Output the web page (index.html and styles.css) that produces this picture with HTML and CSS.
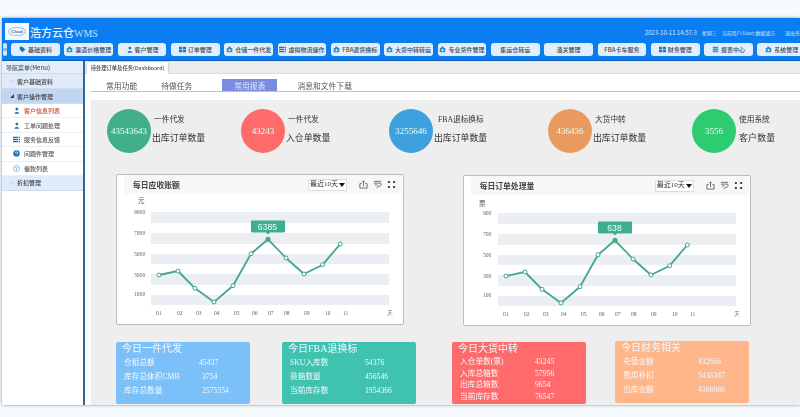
FILE: index.html
```html
<!DOCTYPE html>
<html lang="zh">
<head>
<meta charset="utf-8">
<title>浩方云仓WMS</title>
<link rel="stylesheet" href="styles.css">
</head>
<body>
<svg class="defs" width="0" height="0" aria-hidden="true">
  <symbol id="i-tag" viewBox="0 0 10 10"><path d="M1 1h4l4 4-4 4-4-4z" fill="#1f6fb8"/></symbol>
  <symbol id="i-box" viewBox="0 0 10 10"><path d="M1 3h8v6H1zM3 3V1h4v2" fill="#2f8fd0"/><circle cx="5" cy="6" r="1.4" fill="#fff"/></symbol>
  <symbol id="i-user" viewBox="0 0 10 10"><circle cx="5.5" cy="3" r="2" fill="#1f6fb8"/><path d="M2 9.500c.5-3 6-3 7 0z" fill="#1f6fb8"/></symbol>
  <symbol id="i-grid" viewBox="0 0 10 10"><path d="M0 1h4.500v3.500H0zM5.500 1H10v3.500H5.500zM0 5.500h4.500V9H0zM5.500 5.500H10V9H5.500z" fill="#1f78c8"/></symbol>
  <symbol id="i-list" viewBox="0 0 10 10"><path d="M0 1h7v2H0zM8 1h2v2H8zM0 4h7v2H0zM8 4h2v2H8zM0 7h7v2H0zM8 7h2v2H8z" fill="#2a6ea8"/></symbol>
  <symbol id="i-db" viewBox="0 0 10 10"><path d="M1 1h8v2.300H1zM1 3.900h8v2.300H1zM1 6.800h8v2.300H1z" fill="#3a8fd0"/></symbol>
  <symbol id="i-q" viewBox="0 0 10 10"><circle cx="5" cy="5" r="4.600" fill="#1f78c8"/><path d="M3.500 4c0-2 3-2 3 0 0 1-1.500 1-1.500 2" stroke="#fff" fill="none"/></symbol>
  <symbol id="i-coin" viewBox="0 0 10 10"><circle cx="5" cy="5" r="4.200" fill="none" stroke="#5aa6de"/><path d="M3.500 3 5 5l1.500-2M5 5v3" stroke="#5aa6de" fill="none"/></symbol>
  <symbol id="i-share" viewBox="0 0 10 10"><path d="M3 4H1v5h8V4H7M5 7V1M3.500 2.500 5 1l1.500 1.500" fill="none" stroke="#444" stroke-width=".8"/></symbol>
  <symbol id="i-view" viewBox="0 0 10 10"><path d="M1 1.500h8M1 3.500h7.500c1.500 2-.5 4-2.500 3.500M2 5.500h3M4 8.500c1.500 0 2-1 2-2" fill="none" stroke="#444" stroke-width=".8"/></symbol>
  <symbol id="i-full" viewBox="0 0 10 10"><path d="M1 1h2.200v2.200H1zM6.800 1H9v2.200H6.800zM1 6.800h2.200V9H1zM6.800 6.800H9V9H6.800z" fill="#444"/></symbol>
</svg>

<div class="app">
  <header class="topbar">
    <div class="brand-row">
      <div class="logo"><span class="logo-oval">Cloud</span></div>
      <div class="brand"><span class="brand-cn">浩方云仓</span>WMS</div>
      <div class="status">
        <span>2023-10-11 14:57:3</span>
        <span class="status-day">星期三</span>
        <span class="status-user">当前用户(User):数据填方</span>
        <span class="status-exit">退出系</span>
      </div>
    </div>
    <nav class="nav">
      <button class="collapse">«</button>
      <a class="nav-btn"><svg class="ico"><use href="#i-tag"/></svg>基础资料</a>
      <a class="nav-btn"><svg class="ico"><use href="#i-box"/></svg>渠道价格管理</a>
      <a class="nav-btn"><svg class="ico"><use href="#i-user"/></svg>客户管理</a>
      <a class="nav-btn"><svg class="ico"><use href="#i-grid"/></svg>订单管理</a>
      <a class="nav-btn"><svg class="ico"><use href="#i-box"/></svg>仓储一件代发</a>
      <a class="nav-btn"><svg class="ico"><use href="#i-list"/></svg>虚拟物流操作</a>
      <a class="nav-btn"><svg class="ico"><use href="#i-box"/></svg>FBA退货换标</a>
      <a class="nav-btn"><svg class="ico"><use href="#i-box"/></svg>大货中转转运</a>
      <a class="nav-btn"><svg class="ico"><use href="#i-box"/></svg>专业货件管理</a>
      <a class="nav-btn">集运仓转运</a>
      <a class="nav-btn">清关管理</a>
      <a class="nav-btn">FBA卡车服务</a>
      <a class="nav-btn"><svg class="ico"><use href="#i-grid"/></svg>财务管理</a>
      <a class="nav-btn"><svg class="ico"><use href="#i-db"/></svg>报表中心</a>
      <a class="nav-btn"><svg class="ico"><use href="#i-box"/></svg>系统管理</a>
    </nav>
  </header>

  <div class="body">
    <aside class="side">
      <div class="side-title">导航菜单(Menu)</div>
      <div class="side-group"><span class="caret">▷</span>客户基础资料</div>
      <div class="side-group side-group-open"><span class="caret">◢</span>客户操作管理</div>
      <div class="side-item side-item-on"><svg class="ico"><use href="#i-user"/></svg>客户信息列表</div>
      <div class="side-item"><svg class="ico"><use href="#i-user"/></svg>工单问题处理</div>
      <div class="side-item"><svg class="ico"><use href="#i-list"/></svg>服务信息反馈</div>
      <div class="side-item"><svg class="ico"><use href="#i-q"/></svg>问题件管理</div>
      <div class="side-item"><svg class="ico"><use href="#i-coin"/></svg>催款列表</div>
      <div class="side-group"><span class="caret">▷</span>折扣管理</div>
    </aside>

    <main class="main">
      <div class="tabbar"><div class="tab">待处理订单及任务(Dashboard)</div></div>
      <div class="content">
        <div class="subtabs">
          <span class="subtab subtab-a">常用功能</span>
          <span class="subtab subtab-b">待做任务</span>
          <span class="subtab subtab-on">常用报表</span>
          <span class="subtab subtab-d">消息和文件下载</span>
        </div>
        <section class="panel">
          <div class="stats">
            <div class="stat">
              <div class="circle c-green">43543643</div>
              <div class="stat-text"><div class="stat-top">一件代发</div><div class="stat-main">出库订单数量</div></div>
            </div>
            <div class="stat">
              <div class="circle c-red">43243</div>
              <div class="stat-text"><div class="stat-top">一件代发</div><div class="stat-main">入仓单数量</div></div>
            </div>
            <div class="stat">
              <div class="circle c-blue">3255646</div>
              <div class="stat-text"><div class="stat-top stat-top-in">FBA退标换标</div><div class="stat-main">出库订单数量</div></div>
            </div>
            <div class="stat">
              <div class="circle c-orange">436436</div>
              <div class="stat-text"><div class="stat-top">大货中转</div><div class="stat-main">出库订单数量</div></div>
            </div>
            <div class="stat">
              <div class="circle c-lime">3556</div>
              <div class="stat-text"><div class="stat-top">使用系统</div><div class="stat-main stat-wide">客户数量</div></div>
            </div>
          </div>

          <div class="charts">
            <article class="chart">
              <div class="chart-head">
                <span class="chart-title">每日应收账额</span>
                <span class="picker">最近10天<i class="tri"></i></span>
                <svg class="tool"><use href="#i-share"/></svg>
                <svg class="tool"><use href="#i-view"/></svg>
                <svg class="tool"><use href="#i-full"/></svg>
              </div>
              <svg class="plot" viewBox="117 193 286 130">
                <g class="bands"><rect x="151" y="211" width="238" height="11"/><rect x="151" y="232" width="238" height="11"/><rect x="151" y="253" width="238" height="10"/><rect x="151" y="273" width="238" height="11"/><rect x="151" y="294" width="238" height="10"/></g>
                <g class="axis"><text x="134" y="213">9000</text><text x="134" y="234">7000</text><text x="134" y="255">5000</text><text x="134" y="276">3000</text><text x="134" y="295">1000</text></g>
                <text class="unit" x="138" y="202">元</text>
                <g class="axis axis-x"><text x="156" y="314">01</text><text x="177" y="314">02</text><text x="196" y="314">03</text><text x="214" y="314">04</text><text x="234" y="314">05</text><text x="252" y="314">06</text><text x="268" y="314">07</text><text x="284" y="314">08</text><text x="304" y="314">09</text><text x="325" y="314">10</text><text x="343" y="314">11</text><text x="387" y="314">天</text></g>
                <polyline class="line" points="159,274 178,270 195,287.300 214,301 233,284.700 251,252.700 268,238.300 286,257 304,273 322.700,263.700 340.300,243"/>
                <g class="dots"><circle cx="159" cy="274" r="2"/><circle cx="178" cy="270" r="2"/><circle cx="195" cy="287.300" r="2"/><circle cx="214" cy="301" r="2"/><circle cx="233" cy="284.700" r="2"/><circle cx="251" cy="252.700" r="2"/><circle cx="286" cy="257" r="2"/><circle cx="304" cy="273" r="2"/><circle cx="322.700" cy="263.700" r="2"/><circle cx="340.300" cy="243" r="2"/></g>
                <circle class="dot-on" cx="268" cy="238.300" r="2.500"/>
                <path class="tip" d="M252 219.500h32a1 1 0 0 1 1 1v10a1 1 0 0 1-1 1h-14l-2 2-2-2h-14a1 1 0 0 1-1-1v-10a1 1 0 0 1 1-1z"/>
                <text class="tip-text" x="267.500" y="228.500">6385</text>
              </svg>
            </article>

            <article class="chart chart-low">
              <div class="chart-head">
                <span class="chart-title chart-title-b">每日订单处理量</span>
                <span class="picker">最近10天<i class="tri"></i></span>
                <svg class="tool"><use href="#i-share"/></svg>
                <svg class="tool"><use href="#i-view"/></svg>
                <svg class="tool"><use href="#i-full"/></svg>
              </div>
              <svg class="plot" viewBox="117 193 286 130">
                <g class="bands"><rect x="151" y="211" width="238" height="11"/><rect x="151" y="232" width="238" height="11"/><rect x="151" y="253" width="238" height="10"/><rect x="151" y="273" width="238" height="11"/><rect x="151" y="294" width="238" height="10"/></g>
                <g class="axis"><text x="136" y="213">900</text><text x="136" y="234">700</text><text x="136" y="255">500</text><text x="136" y="276">300</text><text x="136" y="295">100</text></g>
                <text class="unit" x="132" y="204">票</text>
                <g class="axis axis-x"><text x="156" y="314">01</text><text x="177" y="314">02</text><text x="196" y="314">03</text><text x="214" y="314">04</text><text x="234" y="314">05</text><text x="252" y="314">06</text><text x="268" y="314">07</text><text x="284" y="314">08</text><text x="304" y="314">09</text><text x="325" y="314">10</text><text x="343" y="314">11</text><text x="387" y="314">天</text></g>
                <polyline class="line" points="159,274 178,270 195,287.300 214,301 233,284.700 251,252.700 268,238.300 286,257 304,273 322.700,263.700 340.300,243"/>
                <g class="dots"><circle cx="159" cy="274" r="2"/><circle cx="178" cy="270" r="2"/><circle cx="195" cy="287.300" r="2"/><circle cx="214" cy="301" r="2"/><circle cx="233" cy="284.700" r="2"/><circle cx="251" cy="252.700" r="2"/><circle cx="286" cy="257" r="2"/><circle cx="304" cy="273" r="2"/><circle cx="322.700" cy="263.700" r="2"/><circle cx="340.300" cy="243" r="2"/></g>
                <circle class="dot-on" cx="268" cy="238.300" r="2.500"/>
                <path class="tip" d="M252 219.500h32a1 1 0 0 1 1 1v10a1 1 0 0 1-1 1h-14l-2 2-2-2h-14a1 1 0 0 1-1-1v-10a1 1 0 0 1 1-1z"/>
                <text class="tip-text" x="267.500" y="228.500">638</text>
              </svg>
            </article>
          </div>

          <div class="summaries">
            <article class="sum s-blue">
              <h3 class="sum-title">今日一件代发</h3>
              <dl class="sum-rows">
                <div class="sum-row"><dt>仓租总额</dt><dd>45437</dd></div>
                <div class="sum-row"><dt>库存总体积CMB</dt><dd class="nudge">3754</dd></div>
                <div class="sum-row"><dt>库存总数量</dt><dd class="nudge">2575554</dd></div>
              </dl>
            </article>
            <article class="sum s-teal">
              <h3 class="sum-title">今日FBA退换标</h3>
              <dl class="sum-rows">
                <div class="sum-row"><dt>SKU入库数</dt><dd>54376</dd></div>
                <div class="sum-row"><dt>装箱数量</dt><dd>456546</dd></div>
                <div class="sum-row"><dt>当前库存数</dt><dd>1954366</dd></div>
              </dl>
            </article>
            <article class="sum s-red">
              <h3 class="sum-title">今日大货中转</h3>
              <dl class="sum-rows sum-rows-tight">
                <div class="sum-row"><dt>入仓单数(票)</dt><dd>43245</dd></div>
                <div class="sum-row"><dt>入库总箱数</dt><dd>57956</dd></div>
                <div class="sum-row"><dt>出库总箱数</dt><dd>9654</dd></div>
                <div class="sum-row"><dt>当前库存数</dt><dd>76547</dd></div>
              </dl>
            </article>
            <article class="sum s-peach">
              <h3 class="sum-title">今日财务相关</h3>
              <dl class="sum-rows">
                <div class="sum-row"><dt>充值金额</dt><dd>432666</dd></div>
                <div class="sum-row"><dt>费用补扣</dt><dd>5436347</dd></div>
                <div class="sum-row"><dt>出库金额</dt><dd>4366666</dd></div>
              </dl>
            </article>
          </div>
        </section>
      </div>
    </main>
  </div>
</div>
</body>
</html>
```

FILE: styles.css
```css
* { box-sizing: border-box; }
html, body { margin: 0; height: 100%; }
body {
  background: #f6fbff;
  overflow: hidden;
  font-family: "Liberation Serif", "Noto Sans CJK SC", serif;
  color: #333;
  padding: 18px 0 0 2px;
}
.defs { position: absolute; }
.app {
  height: 387px;
  display: flex;
  flex-direction: column;
  box-shadow: 0 0 3px rgba(0,0,0,.45);
  background: #fff;
  filter: blur(.35px);
  overflow: hidden;
}
.ico { width: 7px; height: 7px; flex: none; }

/* header */
.topbar { height: 43px; background: #0a7df2; border-bottom: 1px solid #0a5fb4; flex: none; }
.brand-row { height: 25px; display: flex; align-items: center; padding-left: 3px; color: #fff; }
.logo { width: 24px; height: 17px; background: #f4f8fd; display: flex; align-items: center; justify-content: center; margin-top: 2px; }
.logo-oval { font: bold 4px "Liberation Sans", sans-serif; color: #2a6ab0; border: 1px solid #9cc; border-radius: 50%; padding: 1px 2px; }
.brand { margin-left: 1px; font-size: 10px; color: #bfe0ff; margin-top: 2px; }
.brand-cn { font: 500 11px "Noto Sans CJK SC", sans-serif; color: #e6f3ff; }
.status { margin-left: auto; display: flex; align-items: center; font: 6px "Noto Sans CJK SC", sans-serif; color: #d5e9ff; white-space: nowrap; margin-top: 4px; }
.status-day { margin-left: 5px; font-size: 5px; }
.status-user { margin-left: 5px; font-size: 4.800px; }
.status-exit { margin-left: 10px; font-size: 5px; }
.nav { display: flex; gap: 4.670px; padding-left: 1px; height: 13px; align-items: stretch; white-space: nowrap; }
.collapse { width: 8px; margin-right: -1px; border: 0; padding: 0; background: #d8e7fa; color: #3a78b8; font-size: 8px; border-radius: 2px; line-height: 10px; }
.nav-btn {
  flex: 0 0 48.670px;
  display: flex; align-items: center; justify-content: center; gap: 2px;
  background: #e3eefc; border-radius: 3px;
  font: 500 6px "Noto Sans CJK SC", sans-serif; color: #3a4a5a;
}

/* body */
.body { flex: 1; display: flex; min-height: 0; }
.side { width: 83px; flex: none; border-right: 2px solid #2f6796; background: #fff; font: 500 6px "Noto Sans CJK SC", sans-serif; color: #444; }
.side-title { height: 13px; line-height: 13px; padding-left: 4px; background: #e6eff9; color: #4a5a6a; border-bottom: 1px solid #cfdcec; }
.side-group { height: 15px; display: flex; align-items: center; padding-left: 8px; gap: 3px; background: #dfebfb; border-bottom: 1px solid #cfdcec; }
.side-group-open { background: #c0d6f3; }
.caret { font-size: 4px; color: #888; }
.side-group-open .caret { color: #345; }
.side-item { height: 14.400px; display: flex; align-items: center; gap: 4px; padding-left: 11px; border-bottom: 1px solid #eee; color: #555; }
.side-item-on { color: #c4502f; }

.main { flex: 1; min-width: 0; display: flex; flex-direction: column; }
.tabbar { height: 13px; background: #ececec; padding-left: 1px; border-bottom: 1px solid #ddd; flex: none; }
.tab { width: 83px; height: 13px; background: #fff; border: 1px solid #cdd6e0; border-bottom: 0; border-radius: 2px 2px 0 0; font: 500 5.300px/12px "Noto Sans CJK SC", sans-serif; text-align: center; color: #445; white-space: nowrap; }
.content { flex: 1; padding-left: 6px; display: flex; flex-direction: column; min-height: 0; }
.subtabs { height: 18px; flex: none; display: flex; align-items: flex-end; border-bottom: 1px solid #b7c2e2; font-size: 7.800px; color: #555; }
.subtab { height: 12px; line-height: 11px; padding-top: 2px; white-space: nowrap; }
.subtab-a { margin-left: 15px; }
.subtab-b { margin-left: 24px; }
.subtab-on { margin-left: 30px; width: 55px; background: #7b8be0; color: #dfe4fa; text-align: center; }
.subtab-d { margin-left: 20px; }

.panel { margin-top: 8px; flex: 1; background: #eee; padding: 9px 0 0 16px; min-height: 0; }
.stats { display: grid; grid-template-columns: 134px 148px 159px 144px auto; height: 44px; }
.stat { display: flex; }
.circle { width: 44px; height: 44px; border-radius: 50%; flex: none; display: flex; align-items: center; justify-content: center; color: #e8fff7; font-size: 9px; }
.c-green { background: #41ae8c; }
.c-red { background: #ff6b6b; }
.c-blue { background: #3ea0dc; }
.c-orange { background: #e99b5f; }
.c-lime { background: #2ecc71; }
.stat-text { padding: 6px 0 0 1px; white-space: nowrap; color: #333; }
.stat-top { font-size: 7.700px; line-height: 10px; padding-left: 2px; }
.stat-top-in { padding-left: 4px; }
.stat-main { font-size: 8.900px; line-height: 12px; margin-top: 7px; }
.stat-wide { letter-spacing: .2px; padding-left: 2px; }

.charts { display: flex; gap: 58.700px; margin: 21px 0 0 9px; }
.chart { width: 288px; height: 151px; background: #fff; border: 1px solid #bdbdbd; border-radius: 2px; flex: none; }
.chart-low { margin-top: 1px; }
.chart-head { height: 19px; margin: 0 1px 0 7px; background: #f7f7f7; display: flex; align-items: center; }
.chart-title { margin-left: 9px; font: bold 7.800px "Noto Sans CJK SC", sans-serif; color: #444; width: 175px; }
.picker { width: 39px; height: 12px; background: #fff; border: 1px solid #ddd; font-size: 7px; line-height: 11px; padding-left: 1px; display: flex; align-items: center; gap: 1px; white-space: nowrap; color: #333; margin-right: 12px; }
.tri { width: 0; height: 0; border: 3.500px solid transparent; border-top: 4px solid #111; border-bottom: 0; }
.tool { width: 9px; height: 9px; margin-right: 5px; flex: none; }
.plot { display: block; width: 286px; height: 130px; }
.bands rect { fill: #ebeef3; }
.axis text { font-size: 5.600px; fill: #666; font-family: "Liberation Serif", serif; }
.axis-x text { font-size: 5.600px; }
.unit { font: 6.500px "Noto Sans CJK SC", sans-serif; fill: #555; }
.line { fill: none; stroke: #3fa98a; stroke-width: 1.800; stroke-linejoin: round; }
.dots circle { fill: #fff; stroke: #3fa98a; stroke-width: 1; }
.dot-on { fill: #3fa98a; }
.tip { fill: #3eae8d; }
.tip-text { fill: #eafff7; font-size: 8.700px; text-anchor: middle; font-family: "Liberation Sans", sans-serif; font-weight: 300; }

.summaries { display: flex; margin: 16px 0 0 9px; color: #f2f8ff; }
.sum { width: 134px; height: 62px; border-radius: 2px; padding: 0 0 0 6px; flex: none; }
.sum + .sum { margin-left: 32px; }
.s-teal + .s-red { margin-left: 36px; }
.s-blue { background: #7cc0fa; }
.s-teal { background: #3fc2ae; }
.s-red { background: #ff6a6a; }
.s-peach { background: #ffb68a; margin-top: -1px; margin-left: 29px !important; }
.sum-title { margin: 0; font-size: 10px; line-height: 13px; font-weight: 400; }
.sum-rows { margin: 2px 0 0; padding-left: 2px; display: flex; flex-direction: column; gap: 2.500px; }
.sum-rows-tight { gap: 0; margin-top: 1px; }
.sum-row { display: flex; font-size: 7.700px; line-height: 11.500px; margin: 0; white-space: nowrap; }
.sum-row dt { width: 75px; }
.sum-row dd { margin: 0; }
.nudge { padding-left: 3px; }
```
